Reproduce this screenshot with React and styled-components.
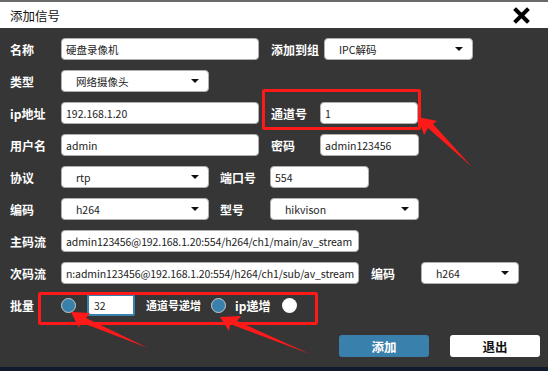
import styled, { createGlobalStyle } from "styled-components"

const Global = createGlobalStyle`
    html, body {
        margin: 0;
        padding: 0;
        background: #363636;
    }
    * {
        box-sizing: border-box;
    }
`;

const FONT = `"Noto Sans CJK SC", "Noto Sans", sans-serif`;

function Close() {
    return (
        <svg width="17" height="17" viewBox="0 0 17 17">
            <path d="M3 3 L14 14 M14 3 L3 14" stroke="#000" strokeWidth="4" strokeLinecap="square" />
        </svg>
    )
}

function Arrows() {
    return (
        <Overlay width="548" height="371" viewBox="0 0 548 371">
            <rect x="263.5" y="90.5" width="156" height="38" fill="none" stroke="#ff1a1a" strokeWidth="3" rx="1" />
            <rect x="39.5" y="293.5" width="277" height="30" fill="none" stroke="#ff1a1a" strokeWidth="3" rx="1" />
            <polygon points="418,117 437,121 433,124 472,167 428,128 424,135" fill="#ff1a1a" />
            <polygon points="71,312 90,313 86,318 148,348 80,322 79,328" fill="#ff1a1a" />
            <polygon points="220,317 241,316 237,321 310,354 230,324 229,331" fill="#ff1a1a" />
        </Overlay>
    )
}

function Select({ w, value }) {
    return (
        <SelectBox $w={w}>
            <span>{value}</span>
            <Caret />
        </SelectBox>
    )
}

export default function App() {
    return (
        <Window>
            <Global />
            <TopEdge />
            <TitleBar>
                <Title>添加信号</Title>
                <Close />
            </TitleBar>
            <Body>
                <Row>
                    <Label>名称</Label>
                    <Field $w={198}>硬盘录像机</Field>
                    <Label $w={53} $ml={12}>添加到组</Label>
                    <Select w={149} value="IPC解码" />
                </Row>
                <Row>
                    <Label>类型</Label>
                    <Select w={148} value="网络摄像头" />
                </Row>
                <Row>
                    <Label>ip地址</Label>
                    <Field $w={198}>192.168.1.20</Field>
                    <Label $w={49} $ml={12}>通道号</Label>
                    <Field $w={98}>1</Field>
                </Row>
                <Row>
                    <Label>用户名</Label>
                    <Field $w={198}>admin</Field>
                    <Label $w={49} $ml={12}>密码</Label>
                    <Field $w={99}>admin123456</Field>
                </Row>
                <Row>
                    <Label>协议</Label>
                    <Select w={148} value="rtp" />
                    <Label $w={50} $ml={11}>端口号</Label>
                    <Field $w={99}>554</Field>
                </Row>
                <Row>
                    <Label>编码</Label>
                    <Select w={148} value="h264" />
                    <Label $w={50} $ml={11}>型号</Label>
                    <Select w={149} value="hikvison" />
                </Row>
                <Row>
                    <Label>主码流</Label>
                    <Field $w={298} $tight>admin123456@192.168.1.20:554/h264/ch1/main/av_stream</Field>
                </Row>
                <Row>
                    <Label>次码流</Label>
                    <Field $w={298} $tight>n:admin123456@192.168.1.20:554/h264/ch1/sub/av_stream</Field>
                    <Label $w={50} $ml={12}>编码</Label>
                    <Select w={98} value="h264" />
                </Row>
                <Row>
                    <Label>批量</Label>
                    <Radio />
                    <Field $w={48} $ml={11} $active>32</Field>
                    <Label $w="auto" $ml={11} $small>通道号递增</Label>
                    <Radio $ml={10} />
                    <Label $w="auto" $ml={9}>ip递增</Label>
                    <Radio $ml={12} $off />
                </Row>
                <Buttons>
                    <Button $primary>添加</Button>
                    <Button>退出</Button>
                </Buttons>
            </Body>
            <BottomEdge />
            <Arrows />
        </Window>
    )
}

const Window = styled.div`
    position: relative;
    width: 548px;
    height: 371px;
    background: #363636;
    display: flex;
    flex-direction: column;
    font-family: ${FONT};
    overflow: hidden;
`;

const TopEdge = styled.div`
    height: 2px;
    background: #6a6a6a;
`;

const TitleBar = styled.div`
    height: 26px;
    background: #fff;
    display: flex;
    align-items: center;
    justify-content: space-between;
    padding: 0 18px 0 10px;
`;

const Title = styled.div`
    font-size: 12.5px;
    color: #111;
`;

const Body = styled.div`
    flex: 1;
    display: flex;
    flex-direction: column;
    gap: 10px;
    padding: 10px 0 0 10px;
`;

const Row = styled.div`
    display: flex;
    align-items: center;
    height: 22px;
`;

const Label = styled.div`
    width: ${p => (p.$w === "auto" ? "auto" : `${p.$w || 51}px`)};
    margin-left: ${p => p.$ml || 0}px;
    color: #fff;
    font-size: ${p => (p.$small ? "11px" : "12px")};
    font-weight: 700;
    white-space: nowrap;
`;

const Field = styled.div`
    width: ${p => p.$w}px;
    margin-left: ${p => p.$ml || 0}px;
    height: 22px;
    background: #fff;
    border: ${p => (p.$active ? "2px solid #3a80ad" : "1px solid #b0b0b0")};
    border-radius: ${p => (p.$active ? "2px" : "4px")};
    padding: 0 ${p => (p.$active ? "5px" : "4px")};
    display: flex;
    align-items: center;
    font-size: 10.5px;
    letter-spacing: ${p => (p.$tight ? "-0.1px" : "0")};
    color: #222;
    white-space: nowrap;
    overflow: hidden;
`;

const SelectBox = styled.div`
    width: ${p => p.$w}px;
    height: 22px;
    background: #fff;
    border: 1px solid #b0b0b0;
    border-radius: 4px;
    padding: 0 9px 0 14px;
    display: flex;
    align-items: center;
    justify-content: space-between;
    font-size: 10.5px;
    color: #222;
    white-space: nowrap;
`;

const Caret = styled.div`
    width: 0;
    height: 0;
    border-left: 4px solid transparent;
    border-right: 4px solid transparent;
    border-top: 4px solid #111;
`;

const Radio = styled.div`
    width: 15px;
    height: 15px;
    margin-left: ${p => p.$ml || 0}px;
    border-radius: 50%;
    background: ${p => (p.$off ? "#fff" : "#3a80ad")};
    border: ${p => (p.$off ? "none" : "1.5px solid #c8c8c8")};
    flex-shrink: 0;
`;

const Buttons = styled.div`
    display: flex;
    justify-content: flex-end;
    gap: 21px;
    margin-top: 9px;
    padding-right: 8px;
`;

const Button = styled.div`
    width: 90px;
    height: 22px;
    border-radius: 3px;
    background: ${p => (p.$primary ? "#3a80ad" : "#fff")};
    color: ${p => (p.$primary ? "#fff" : "#111")};
    font-size: 12.5px;
    font-weight: 700;
    display: flex;
    align-items: center;
    justify-content: center;
`;

const BottomEdge = styled.div`
    height: 4px;
    background: #101a2c;
`;

const Overlay = styled.svg`
    position: absolute;
    left: 0;
    top: 0;
    pointer-events: none;
`;
